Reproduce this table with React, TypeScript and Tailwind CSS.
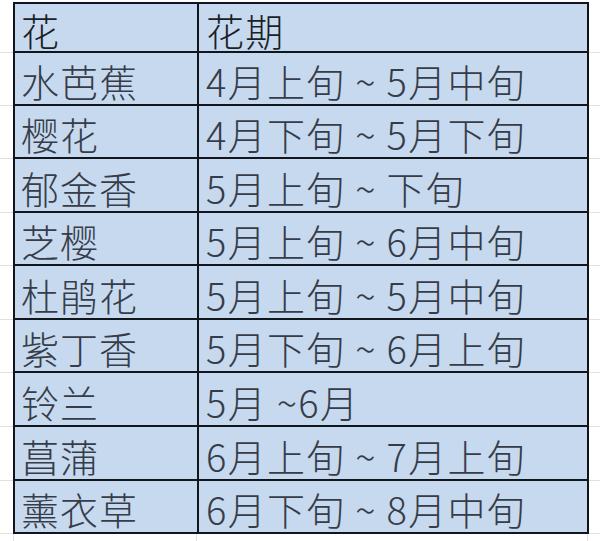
const rows: { name: string; period: string; h: string }[] = [
  { name: '水芭蕉', period: '4月上旬 ~ 5月中旬', h: 'h-[53px]' },
  { name: '樱花', period: '4月下旬 ~ 5月下旬', h: 'h-[53px]' },
  { name: '郁金香', period: '5月上旬 ~ 下旬', h: 'h-[54px]' },
  { name: '芝樱', period: '5月上旬 ~ 6月中旬', h: 'h-[53px]' },
  { name: '杜鹃花', period: '5月上旬 ~ 5月中旬', h: 'h-[54px]' },
  { name: '紫丁香', period: '5月下旬 ~ 6月上旬', h: 'h-[53px]' },
  { name: '铃兰', period: '5月 ~6月', h: 'h-[54px]' },
  { name: '菖蒲', period: '6月上旬 ~ 7月上旬', h: 'h-[54px]' },
  { name: '薰衣草', period: '6月下旬 ~ 8月中旬', h: 'h-[53px]' },
];

const font = { fontFamily: '"Noto Sans CJK SC", "Noto Sans", sans-serif' };

function Row({ name, period, h, head }: { name: string; period: string; h: string; head?: boolean }) {
  const text = head ? 'text-[#1b1f26]' : 'text-[#363c48]';
  return (
    <div className={`flex ${h}`}>
      <div className="w-[13px] shrink-0 border-b border-[#e0e0e0]" />
      <div className={`flex w-[184px] shrink-0 items-center border-b-2 border-l-2 border-[#11151c] bg-[#c6d9ef] pl-[6px] pt-[5px] text-[38px] font-light leading-none tracking-[1px] ${text}`}>
        {name}
      </div>
      <div className={`flex w-[392px] shrink-0 items-center border-x-2 border-b-2 border-[#11151c] bg-[#c6d9ef] pl-[7px] pt-[5px] text-[38px] font-light leading-none tracking-[1.3px] ${text}`}>
        {period}
      </div>
      <div className="flex-1 border-b border-[#e0e0e0]" />
    </div>
  );
}

export default function App() {
  return (
    <div className="h-[541px] w-[600px] overflow-hidden bg-white pt-[2px]" style={font}>
      <div className="ml-[13px] mr-[11px] border-t-2 border-[#11151c]" />
      <Row name="花" period="花期" h="h-[49px]" head />
      {rows.map((r) => (
        <Row key={r.name} name={r.name} period={r.period} h={r.h} />
      ))}
      <div className="flex h-[10px]">
        <div className="w-[14px] shrink-0 border-r border-[#e0e0e0]" />
        <div className="w-[183px] shrink-0 border-r border-[#e0e0e0]" />
        <div className="w-[391px] shrink-0 border-r border-[#e0e0e0]" />
      </div>
    </div>
  );
}
